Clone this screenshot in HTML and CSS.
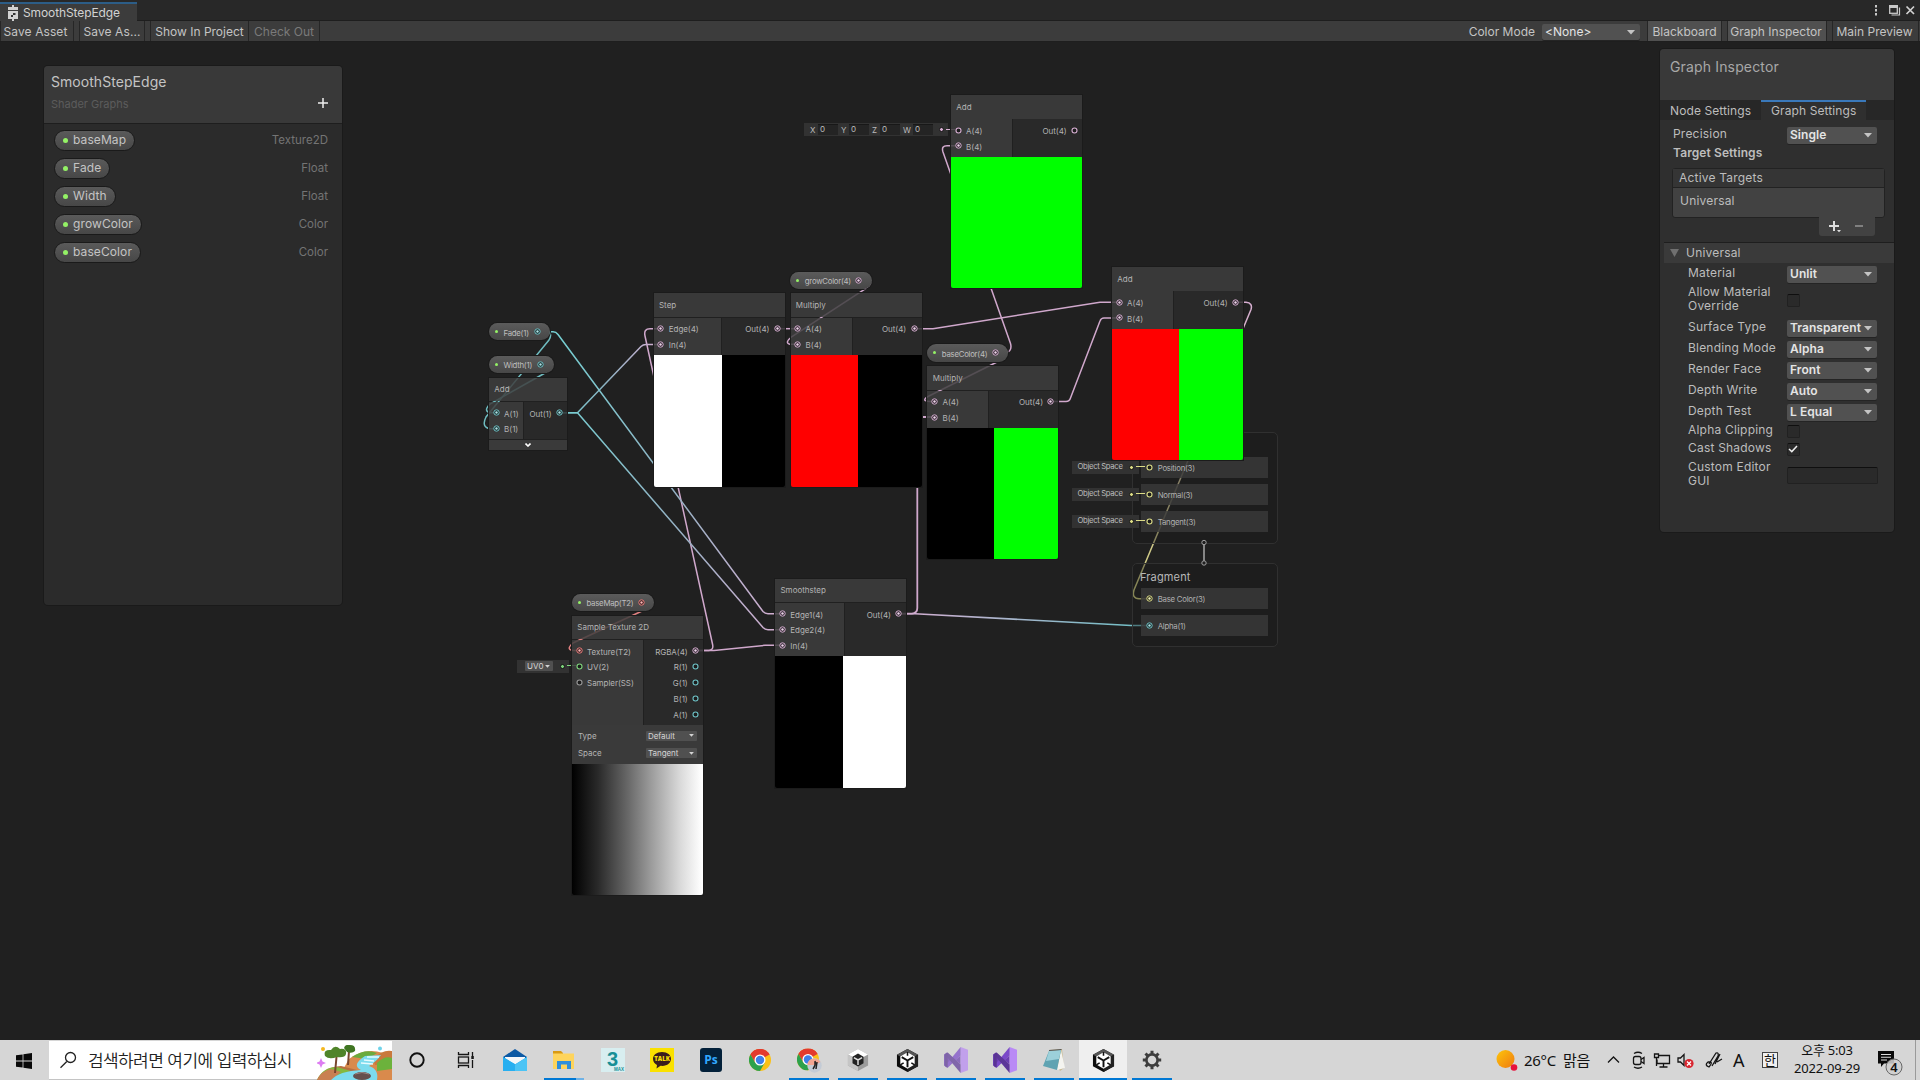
FILE: index.html
```html
<!DOCTYPE html>
<html lang="ko">
<head>
<meta charset="utf-8">
<title>SmoothStepEdge</title>
<link rel="stylesheet" href="styles.css">
</head>
<body>
<svg class="defs" width="0" height="0">
  <symbol id="on" viewBox="0 0 7 7"><circle cx="3.5" cy="3.5" r="2.7" fill="#1c1c1c" stroke="currentColor" stroke-width="1"/><circle cx="3.5" cy="3.5" r="1.300" fill="currentColor"/><circle cx="3.5" cy="3.5" r=".9" fill="#ffffff80"/></symbol>
  <symbol id="off" viewBox="0 0 7 7"><circle cx="3.5" cy="3.5" r="2.5" fill="#1c1c1c" stroke="currentColor" stroke-width="1.100"/></symbol>
  <symbol id="arrow" viewBox="0 0 8 5"><path d="M0 0H8L4 4.6Z" fill="currentColor"/></symbol>
  <symbol id="unity" viewBox="0 0 24 26"><path d="M12 1 23 7V19L12 25 1 19V7Z" fill="#0c0c0c"/><path d="M12 1 23 7 12 13 1 7Z" fill="#555"/><path d="M12 13 23 7V19L12 25Z" fill="#222"/><path d="M12 4.5 19.5 8.8V17.2L12 21.5 4.500 17.200V8.800Z" fill="#fff"/><path d="M12 13V20M12 13 6 9.500M12 13 18 9.500" stroke="#111" stroke-width="2"/><path d="M12 4V8M4.500 17.500 8 15.500M19.500 17.500 16 15.500" stroke="#111" stroke-width="1.600"/></symbol>
  <symbol id="chrome" viewBox="0 0 24 24"><circle cx="12" cy="12" r="12" fill="#fbc116"/><path d="M12 12 1.600 6A12 12 0 0 1 22.400 6Z" fill="#e33b2e"/><path d="M12 6H22.400A12 12 0 0 0 1.600 6L6.800 15Z" fill="#e33b2e"/><path d="M1.600 6A12 12 0 0 0 12 24L17.200 15 6.800 15Z" fill="#2da14c"/><circle cx="12" cy="12" r="6" fill="#fff"/><circle cx="12" cy="12" r="4.600" fill="#3f7fe8"/></symbol>
  <symbol id="vs" viewBox="0 0 26 28"><path d="M0 8 3 6 18 19V9L3 22 0 20Z" fill="#6a3fb0"/><path d="M18 0 26 3V25L18 28Z" fill="#b98af5"/><path d="M18 0V9L4 22.500 1 20.500Z" fill="#7a49c8"/><path d="M18 28V19L4 6 1 8Z" fill="#5c3798"/><path d="M1 8 4 6V22.500L1 20.500Z" fill="#5a3494"/></symbol>
</svg>

<header class="tabbar">
  <div class="doc-tab">
    <svg width="12" height="16" viewBox="0 0 12 16"><path d="M1 2H11V5H1ZM1 6H11V14H1ZM5 0H7V2H5ZM5 14H7V16H5Z" fill="#d2d2d2"/><path d="M6 8H8.500V10H6ZM4 10H6V12H4Z" fill="#333"/></svg>
    <span>SmoothStepEdge</span>
  </div>
  <div class="window-buttons">
    <svg width="46" height="12" viewBox="0 0 46 12"><g fill="#c8c8c8"><path d="M5 0H7V2.400H5ZM5 4H7V6.400H5ZM5 8H7V10.400H5Z"/></g><rect x="19.700" y=".7" width="7.600" height="7.600" fill="none" stroke="#c8c8c8" stroke-width="1.300"/><path d="M19 0H28V3H19Z" fill="#c8c8c8"/><path d="M29.500 2.500V10H21.500" fill="none" stroke="#c8c8c8" stroke-width="1.200"/><path d="M36.500 1.500 44 9M44 1.500 36.500 9" stroke="#d2d2d2" stroke-width="1.700"/></svg>
  </div>
</header>

<nav class="toolbar">
  <button class="tool t-save">Save Asset</button>
  <button class="tool t-saveas">Save As...</button>
  <button class="tool t-show">Show In Project</button>
  <button class="tool t-check">Check Out</button>
  <span class="color-mode">Color Mode</span>
  <div class="dropdown mode"><span>&lt;None&gt;</span><svg width="8" height="5"><use href="#arrow"/></svg></div>
  <button class="tool on t-board">Blackboard</button>
  <button class="tool on t-insp">Graph Inspector</button>
  <button class="tool t-prev">Main Preview</button>
</nav>

<main class="canvas">
  <svg class="edges" width="1920" height="1080" viewBox="0 0 1920 1080">
    <defs>
      <linearGradient id="g1" gradientUnits="userSpaceOnUse" x1="559" y1="0" x2="661" y2="0"><stop offset="0" stop-color="#75cfd2"/><stop offset=".4" stop-color="#86b4c2"/><stop offset="1" stop-color="#d6add1"/></linearGradient>
      <linearGradient id="g2" gradientUnits="userSpaceOnUse" x1="559" y1="0" x2="783" y2="0"><stop offset="0" stop-color="#75cfd2"/><stop offset=".5" stop-color="#93b2c4"/><stop offset="1" stop-color="#d6add1"/></linearGradient>
      <linearGradient id="g3" gradientUnits="userSpaceOnUse" x1="899" y1="0" x2="1149" y2="0"><stop offset="0" stop-color="#d6add1"/><stop offset="1" stop-color="#6dc0c6"/></linearGradient>
      <linearGradient id="g4" gradientUnits="userSpaceOnUse" x1="0" y1="302" x2="0" y2="598"><stop offset="0" stop-color="#d6add1"/><stop offset=".6" stop-color="#cfc39a"/><stop offset="1" stop-color="#cfce7c"/></linearGradient>
    </defs>
    <g fill="none" stroke-width="1.500" stroke="#d0a8cc">
      <path d="M777 328.700H798"/>
      <path d="M914 328.700H933L1100 302.300H1120"/>
      <path d="M859 280H868Q874 283 866 288.500L792 336.500Q784 343 790 344.300H798"/>
      <path d="M995 353H1001Q1004 357 997 362L929 396Q920 401 930 401.500H935"/>
      <path d="M995 353H1006Q1012.500 351 1010.500 343.500L943 152Q941 145.700 947 145.700H958"/>
      <path d="M1051 401.500H1066Q1069.500 401.500 1070.500 398L1100 321Q1101 318 1104 318H1120"/>
      <path d="M899 613.700H912Q917.300 613 917.300 608V421Q917.300 417 921 417H935" stroke-width="1.800"/>
      <path d="M695 650.500H714L765 645.300H783"/>
      <path d="M695 650.500H709Q713.500 650 712.700 645L645 336Q643.500 328.700 650 328.700H661"/>
      <path d="M559 412.700H577.500L641 346.500Q643 344.500 646 344.500H661" stroke="url(#g1)"/>
      <path d="M559 412.700H577.500L763 627.500Q765 629.700 768 629.700H783" stroke="url(#g2)"/>
      <path d="M537 331.700H553Q556 331.700 558 334.500L763 611.500Q765 613.700 768 613.700H783" stroke="url(#g2)"/>
      <path d="M537 331.700H547Q553 333 549 340L486 417Q481 427 490 428.700H497" stroke="#6fbcc0"/>
      <path d="M541 364H547Q552 368 545 373L490 404Q483 411 490 412.700H497" stroke="#6fbcc0"/>
      <path d="M899 613.700H915L1131 625.600H1149" stroke="url(#g3)"/>
      <path d="M1235 302.300H1246Q1253 303 1251 309.500L1134 590Q1131.500 598.500 1139 598.700H1149" stroke="url(#g4)"/>
      <path d="M640 602H645Q650 607 641 611.500L573 643Q565 650 574 650.500H580" stroke="#e08080"/>
    </g>
  </svg>

  <section class="context vertex">
    <div class="block"><svg class="port vec3"><use href="#off"/></svg><span>Position(3)</span></div>
    <div class="block"><svg class="port vec3"><use href="#off"/></svg><span>Normal(3)</span></div>
    <div class="block"><svg class="port vec3"><use href="#off"/></svg><span>Tangent(3)</span></div>
  </section>
  <section class="context fragment">
    <h3>Fragment</h3>
    <div class="block"><svg class="port vec3"><use href="#on"/></svg><span>Base Color(3)</span></div>
    <div class="block"><svg class="port vec1"><use href="#on"/></svg><span>Alpha(1)</span></div>
  </section>
  <svg class="link" width="10" height="30" viewBox="0 0 10 30"><path d="M5 7V23" stroke="#a0a0a0" stroke-width="1.600"/><g fill="#202020" stroke="#a0a0a0"><circle cx="5" cy="4.500" r="2.200"/><circle cx="5" cy="25" r="2.200"/></g></svg>

  <div class="slot space s1"><span>Object Space</span><i class="pin vec3"></i></div>
  <div class="slot space s2"><span>Object Space</span><i class="pin vec3"></i></div>
  <div class="slot space s3"><span>Object Space</span><i class="pin vec3"></i></div>

  <div class="slot vector"><b>X</b><u>0</u><b>Y</b><u>0</u><b>Z</b><u>0</u><b class="w">W</b><u>0</u><i class="pin vec4"></i></div>
  <div class="slot uv"><div class="mini"><span>UV0</span><svg width="5" height="3" viewBox="0 0 8 5"><use href="#arrow"/></svg></div><i class="pin vec2"></i></div>

  <article class="node n-addtop">
    <h2>Add</h2>
    <div class="ports"><div class="in"><p><svg class="port vec4"><use href="#off"/></svg>A(4)</p><p><svg class="port vec4"><use href="#on"/></svg>B(4)</p></div><div class="out"><p>Out(4)<svg class="port vec4"><use href="#off"/></svg></p></div></div>
    <div class="preview green"></div>
  </article>

  <article class="node n-step">
    <h2>Step</h2>
    <div class="ports"><div class="in"><p><svg class="port vec4"><use href="#on"/></svg>Edge(4)</p><p><svg class="port vec4"><use href="#on"/></svg>In(4)</p></div><div class="out"><p>Out(4)<svg class="port vec4"><use href="#on"/></svg></p></div></div>
    <div class="preview white-black"></div>
  </article>

  <article class="node n-mul1">
    <h2>Multiply</h2>
    <div class="ports"><div class="in"><p><svg class="port vec4"><use href="#on"/></svg>A(4)</p><p><svg class="port vec4"><use href="#on"/></svg>B(4)</p></div><div class="out"><p>Out(4)<svg class="port vec4"><use href="#on"/></svg></p></div></div>
    <div class="preview red-black"></div>
  </article>

  <article class="node n-mul2">
    <h2>Multiply</h2>
    <div class="ports"><div class="in"><p><svg class="port vec4"><use href="#on"/></svg>A(4)</p><p><svg class="port vec4"><use href="#on"/></svg>B(4)</p></div><div class="out"><p>Out(4)<svg class="port vec4"><use href="#on"/></svg></p></div></div>
    <div class="preview black-green"></div>
  </article>

  <article class="node n-addright">
    <h2>Add</h2>
    <div class="ports"><div class="in"><p><svg class="port vec4"><use href="#on"/></svg>A(4)</p><p><svg class="port vec4"><use href="#on"/></svg>B(4)</p></div><div class="out"><p>Out(4)<svg class="port vec4"><use href="#on"/></svg></p></div></div>
    <div class="preview red-green"></div>
  </article>

  <article class="node n-addleft">
    <h2>Add</h2>
    <div class="ports"><div class="in"><p><svg class="port vec1"><use href="#on"/></svg>A(1)</p><p><svg class="port vec1"><use href="#on"/></svg>B(1)</p></div><div class="out"><p>Out(1)<svg class="port vec1"><use href="#on"/></svg></p></div></div>
    <div class="foot"><svg width="6" height="4" viewBox="0 0 6 4"><path d="M.5 .5 3 3 5.500 .5" fill="none" stroke="#fff" stroke-width="1.600"/></svg></div>
  </article>

  <article class="node n-smooth">
    <h2>Smoothstep</h2>
    <div class="ports"><div class="in"><p><svg class="port vec4"><use href="#on"/></svg>Edge1(4)</p><p><svg class="port vec4"><use href="#on"/></svg>Edge2(4)</p><p><svg class="port vec4"><use href="#on"/></svg>In(4)</p></div><div class="out"><p>Out(4)<svg class="port vec4"><use href="#on"/></svg></p></div></div>
    <div class="preview black-white"></div>
  </article>

  <article class="node n-sample">
    <h2>Sample Texture 2D</h2>
    <div class="ports"><div class="in"><p><svg class="port tex"><use href="#on"/></svg>Texture(T2)</p><p><svg class="port vec2"><use href="#off"/></svg>UV(2)</p><p><svg class="port ss"><use href="#off"/></svg>Sampler(SS)</p></div><div class="out"><p>RGBA(4)<svg class="port vec4"><use href="#on"/></svg></p><p>R(1)<svg class="port vec1"><use href="#off"/></svg></p><p>G(1)<svg class="port vec1"><use href="#off"/></svg></p><p>B(1)<svg class="port vec1"><use href="#off"/></svg></p><p>A(1)<svg class="port vec1"><use href="#off"/></svg></p></div></div>
    <div class="controls">
      <div class="control"><span>Type</span><div class="mini"><span>Default</span><svg width="5" height="3" viewBox="0 0 8 5"><use href="#arrow"/></svg></div></div>
      <div class="control"><span>Space</span><div class="mini"><span>Tangent</span><svg width="5" height="3" viewBox="0 0 8 5"><use href="#arrow"/></svg></div></div>
    </div>
    <div class="preview ramp"></div>
  </article>

  <div class="pill p-fade"><i></i><span>Fade(1)</span><svg class="port vec1"><use href="#on"/></svg></div>
  <div class="pill p-width"><i></i><span>Width(1)</span><svg class="port vec1"><use href="#on"/></svg></div>
  <div class="pill p-grow"><i></i><span>growColor(4)</span><svg class="port vec4"><use href="#on"/></svg></div>
  <div class="pill p-base"><i></i><span>baseColor(4)</span><svg class="port vec4"><use href="#on"/></svg></div>
  <div class="pill p-map"><i></i><span>baseMap(T2)</span><svg class="port tex"><use href="#on"/></svg></div>

  <aside class="blackboard">
    <header>
      <div><h1>SmoothStepEdge</h1><small>Shader Graphs</small></div>
      <svg width="10" height="10" viewBox="0 0 10 10"><path d="M5 0V10M0 5H10" stroke="#eee" stroke-width="1.500"/></svg>
    </header>
    <ul>
      <li><span class="prop"><i></i>baseMap</span><em>Texture2D</em></li>
      <li><span class="prop"><i></i>Fade</span><em>Float</em></li>
      <li><span class="prop"><i></i>Width</span><em>Float</em></li>
      <li><span class="prop"><i></i>growColor</span><em>Color</em></li>
      <li><span class="prop"><i></i>baseColor</span><em>Color</em></li>
    </ul>
  </aside>

  <aside class="inspector">
    <h1>Graph Inspector</h1>
    <div class="tabs"><span class="tab">Node Settings</span><span class="tab active">Graph Settings</span></div>
    <div class="field precision"><label>Precision</label><div class="dropdown"><span>Single</span><svg width="8" height="5"><use href="#arrow"/></svg></div></div>
    <h4>Target Settings</h4>
    <div class="targets"><div class="targets-head">Active Targets</div><div class="targets-item">Universal</div></div>
    <div class="targets-buttons"><svg width="56" height="19" viewBox="0 0 56 19"><path d="M15 4V14M10 9H20" stroke="#ddd" stroke-width="2"/><path d="M18 13H22L20 15.200Z" fill="#ddd"/><path d="M36 9H44" stroke="#808080" stroke-width="2"/></svg></div>
    <div class="fold"><svg width="9" height="8" viewBox="0 0 9 8"><path d="M0 0H9L4.500 8Z" fill="#707070"/></svg><span>Universal</span></div>
    <div class="fields">
      <div class="field"><label>Material</label><div class="dropdown"><span>Unlit</span><svg width="8" height="5"><use href="#arrow"/></svg></div></div>
      <div class="field tall"><label>Allow Material Override</label><div class="check"></div></div>
      <div class="field"><label>Surface Type</label><div class="dropdown"><span>Transparent</span><svg width="8" height="5"><use href="#arrow"/></svg></div></div>
      <div class="field"><label>Blending Mode</label><div class="dropdown"><span>Alpha</span><svg width="8" height="5"><use href="#arrow"/></svg></div></div>
      <div class="field"><label>Render Face</label><div class="dropdown"><span>Front</span><svg width="8" height="5"><use href="#arrow"/></svg></div></div>
      <div class="field"><label>Depth Write</label><div class="dropdown"><span>Auto</span><svg width="8" height="5"><use href="#arrow"/></svg></div></div>
      <div class="field"><label>Depth Test</label><div class="dropdown"><span>L Equal</span><svg width="8" height="5"><use href="#arrow"/></svg></div></div>
      <div class="field short"><label>Alpha Clipping</label><div class="check"></div></div>
      <div class="field short"><label>Cast Shadows</label><div class="check"><svg width="10" height="8" viewBox="0 0 10 8"><path d="M1 4 3.800 6.600 9 1" fill="none" stroke="#eee" stroke-width="1.500"/></svg></div></div>
      <div class="field tall last"><label>Custom Editor GUI</label><div class="textbox"></div></div>
    </div>
  </aside>
</main>

<footer class="taskbar">
  <div class="start"><svg width="16" height="16" viewBox="0 0 16 16"><path d="M0 2.300 6.600 1.400V7.600H0ZM7.400 1.300 16 0V7.600H7.400ZM0 8.400H6.600V14.600L0 13.700ZM7.400 8.400H16V16L7.400 14.700Z" fill="#0a0a0a"/></svg></div>
  <div class="search">
    <svg class="lens" width="18" height="18" viewBox="0 0 18 18"><circle cx="11" cy="6.500" r="5" fill="none" stroke="#222" stroke-width="1.300"/><path d="M7.300 10.500 1 16.700" stroke="#222" stroke-width="1.300"/></svg>
    <span>검색하려면 여기에 입력하십시</span>
    <svg class="scene" width="75" height="35" viewBox="0 0 75 35">
      <path d="M32 14Q48 2 66 8L75 20V35H20Z" fill="#d98a4c"/><path d="M35 12Q48 3 60 8L50 14Z" fill="#6aab3c"/><path d="M56 14Q66 4 75 6V20H58Z" fill="#c9793c"/><path d="M60 18Q68 10 75 13V24L60 26Z" fill="#6cb23c"/>
      <path d="M0 35Q6 22 24 21L44 26 30 35Z" fill="#b9703f"/><path d="M0 35Q6 22 20 22L34 26 20 31Z" fill="#84b93f"/><path d="M0 35Q4 26 14 24L24 27 14 35Z" fill="#c98052"/>
      <path d="M48 11 64 10Q60 16 52 21 62 24 60 35H14Q22 26 44 25 34 20 48 11Z" fill="#7ddcee"/><path d="M50 12H62M47 15 57 16M44 18 56 19" stroke="#e6fbff" stroke-width="1.300"/><ellipse cx="45" cy="31" rx="9" ry="4" fill="#65504e"/><path d="M38 29Q45 26 52 29" stroke="#9b8683" fill="none"/>
      <path d="M18 28 19.500 12M31 20 32 6" stroke="#79472e" stroke-width="2"/><path d="M8 11Q6 4 14 5 18-1 23 4 30 3 29 9 28 13 20 12 12 15 8 11Z" fill="#4f8429"/><path d="M27 3Q28-1 33 0 39 0 38 6 35 9 30 7Z" fill="#3f7522"/>
      <circle cx="6" cy="4" r="2" fill="#f5b81e"/><circle cx="63" cy="3.500" r="2" fill="#6fd3ea"/><path d="M4 13 5.500 16.500 9 18 5.500 19.500 4 23 2.500 19.500-1 18 2.500 16.500Z" fill="#dd7df2"/>
    </svg>
  </div>
  <div class="apps">
    <div class="app"><svg width="18" height="18" viewBox="0 0 18 18"><circle cx="9" cy="9" r="6.700" fill="none" stroke="#111" stroke-width="1.900"/></svg></div>
    <div class="app"><svg width="18" height="18" viewBox="0 0 18 18"><g fill="none" stroke="#161616" stroke-width="1.300"><path d="M1.500 1V3.500H11.500V1M1.500 17V14.500H11.500V17"/><rect x="1.500" y="6" width="10" height="6"/><path d="M15.500 1V5M15.500 9V17"/></g><path d="M14.300 5H16.800V8H14.300Z" fill="#161616"/></svg></div>
    <div class="app"><svg width="24" height="24" viewBox="0 0 24 24"><path d="M0 9 12 1 24 9V13H0Z" fill="#0c59a4"/><path d="M2 9H22V15L12 17 2 15Z" fill="#f5f7f9"/><path d="M0 9 12 16.500 24 9V23H0Z" fill="#1c9be8"/><path d="M0 9 24 23H0Z" fill="#28aff0"/><path d="M12 16.500 24 9V23H12Z" fill="#4cc4f5"/><path d="M3 9H21L12 15Z" fill="#f5f7f9"/></svg></div>
    <div class="app run many"><svg width="24" height="22" viewBox="0 0 24 22"><path d="M1 2H9L11 4V9H1Z" fill="#d99a13"/><path d="M1 4.500H22V20H1Z" fill="#fed45c"/><path d="M5 20V12H19V20H15V15.500H9V20Z" fill="#2f8fdc"/></svg></div>
    <div class="app"><svg class="max" width="24" height="24" viewBox="0 0 24 24"><rect width="24" height="24" fill="#d8eef0"/><text class="max3" x="6" y="17.500">3</text><text class="maxs" x="13" y="22.800">MAX</text></svg></div>
    <div class="app"><svg width="24" height="24" viewBox="0 0 24 24"><rect width="24" height="24" fill="#fae100"/><path d="M12 4C6.500 4 3 7 3 11 3 14 5 16 7 17L6.500 20.500 10.500 17.800C17 18.500 21 15 21 11 21 7 17.500 4 12 4Z" fill="#3a1d1d"/><text class="talk" x="12" y="13.300" text-anchor="middle">TALK</text></svg></div>
    <div class="app"><svg width="22" height="24" viewBox="0 0 22 24"><rect width="22" height="24" rx="3" fill="#04213a"/><text class="ps" x="11" y="16" text-anchor="middle">Ps</text></svg></div>
    <div class="app"><svg width="22" height="22"><use href="#chrome"/></svg></div>
    <div class="app run"><svg width="26" height="26" viewBox="0 0 26 26"><use href="#chrome" x="1" y="1.500" width="22" height="22"/><circle cx="18.500" cy="18.500" r="7.200" fill="#c3cbd6"/><path d="M11.300 18A7.200 7.200 0 0 1 24.500 15L19 18Z" fill="#f2a592"/><path d="M17 22Q20 18 19 14M21 15 20 22" stroke="#222" stroke-width="1.500" fill="none"/></svg></div>
    <div class="app run"><svg width="22" height="24" viewBox="0 0 24 26"><path d="M12 1 23 7V19L12 25 1 19V7Z" fill="#9c9c9c"/><path d="M12 1 23 7 12 13 1 7Z" fill="#fff"/><path d="M1 7 12 13V25L1 19Z" fill="#c5c5c5"/><path d="M12 6 18 9.500V16.500L12 20 6 16.500V9.500Z" fill="#222"/><path d="M12 13V18.500M12 13 7.500 10.500M12 13 16.500 10.500" stroke="#ddd" stroke-width="1.600"/></svg></div>
    <div class="app run"><svg width="23" height="25"><use href="#unity"/></svg></div>
    <div class="app run"><svg class="faded" width="24" height="26"><use href="#vs"/></svg></div>
    <div class="app run"><svg width="24" height="26"><use href="#vs"/></svg></div>
    <div class="app run"><svg width="24" height="24" viewBox="0 0 24 24"><path d="M7 2 20 1 22 20 18 23Z" fill="#c9b98d"/><path d="M19 2 23 20 15 22Z" fill="#f4f4f0"/><path d="M7 3 19 2 15 22 1 18Z" fill="#5fa3b2"/><path d="M7 3 19 2 17 11 4 13Z" fill="#9cd0da"/><path d="M7 2.500 19.500 1.500" stroke="#555" stroke-width="1"/></svg></div>
    <div class="app run active"><svg width="23" height="25"><use href="#unity"/></svg></div>
    <div class="app run"><svg width="20" height="20" viewBox="0 0 20 20"><circle cx="10" cy="10" r="5.600" fill="none" stroke="#3d3d3d" stroke-width="2.600"/><path d="M10 .8V4M10 16V19.200M.8 10H4M16 10H19.200M3.500 3.500 5.700 5.700M14.300 14.300 16.500 16.500M16.500 3.500 14.300 5.700M5.700 14.300 3.500 16.500" stroke="#3d3d3d" stroke-width="3"/></svg></div>
  </div>
  <div class="tray">
    <svg class="sun" width="22" height="22" viewBox="0 0 22 22"><defs><linearGradient id="sg" x1="0" y1="0" x2="1" y2="1"><stop offset="0" stop-color="#fdc50b"/><stop offset="1" stop-color="#ef7a11"/></linearGradient></defs><circle cx="9.500" cy="10" r="9" fill="url(#sg)"/><circle cx="18" cy="18.500" r="3.300" fill="#e8113c"/></svg>
    <span class="weather">26°C&nbsp; 맑음</span>
    <svg class="icons" width="126" height="20" viewBox="0 0 126 20">
      <g fill="none" stroke="#151515" stroke-width="1.300">
        <path d="M1 12.500 6.500 7 12 12.500"/>
        <rect x="26.500" y="6.500" width="7.500" height="8" rx="2"/><path d="M34 9.500 37 7.500V13.500L34 11.500M27 3.500Q31 1 35 3.500M27 17Q31 19.500 35 17"/>
        <path d="M51 5.500H62.500V13.500H50V9.500M56.500 13.500V17M52.500 17H60.500"/><path d="M47.500 4H51.500V7.500H47.500ZM49.500 7.500V16"/>
        <path d="M71 8H73.500L77 4.500V15.500L73.500 12H71Z"/>
        <path d="M102 17Q97 15 101 12 107 11 102 17M102 14 109 3Q112 2 111 6L105 16M108 14 113 4M110 12 115 9"/>
      </g>
      <circle cx="82" cy="13.500" r="4.600" fill="#d8252f"/><path d="M80 11.500 84 15.500M84 11.500 80 15.500" stroke="#fff" stroke-width="1.300"/>
    </svg>
    <span class="ime-a">A</span>
    <span class="ime-k">한</span>
    <div class="clock"><span>오후 5:03</span><span>2022-09-29</span></div>
    <div class="notes"><svg width="26" height="26" viewBox="0 0 26 26"><path d="M0 1H16V13.500H6L3 17V13.500H0Z" fill="#0a0a0a"/><path d="M3 4.500H13M3 7.200H13M3 10H9" stroke="#ddd" stroke-width="1.100"/><circle cx="16" cy="17" r="8" fill="#cfcfcfe0" stroke="#666"/><text class="count" x="16" y="22" text-anchor="middle">4</text></svg></div>
  </div>
</footer>
</body>
</html>
```

FILE: styles.css
```css
* { box-sizing: border-box; }
body {
  margin: 0; width: 1920px; height: 1080px; overflow: hidden;
  display: flex; flex-direction: column;
  background: #202020; color: #c4c4c4;
  font: 12px/14px Inter, "Noto Sans CJK KR", sans-serif;
}
h1, h2, h3, h4, p, ul { margin: 0; padding: 0; font-weight: 400; list-style: none; }
.defs { position: absolute; }
svg { display: block; flex: none; }

/* window tab strip */
.tabbar { height: 21px; flex: none; display: flex; justify-content: space-between; background: #282828; border-bottom: 1px solid #1e1e1e; }
.doc-tab { width: 137px; height: 19px; margin-top: 2px; display: flex; align-items: center; gap: 4px; padding-left: 7px; background: #3c3c3c; border-top: 2px solid #2c5d87; color: #d2d2d2; letter-spacing: -.1px; }
.window-buttons { padding: 5px 4px 0 0; }

.toolbar { height: 21px; flex: none; display: flex; background: #3c3c3c; border-bottom: 1px solid #1e1e1e; }
.tool { height: 20px; margin: 0; padding: 1px 0 0; border: 1px solid #262626; border-width: 0 1px; background: #3c3c3c; color: #c4c4c4; font: 12px/18px Inter, sans-serif; letter-spacing: 0; text-align: center; white-space: nowrap; }
.tool.on { background: #505050; }
.t-save { width: 74px; margin-right: 5px; padding-right: 3px; letter-spacing: .1px; }
.t-saveas { width: 66px; margin-right: 5px; letter-spacing: .1px; }
.t-show { width: 99px; }
.t-check { width: 71px; color: #7a7a7a; border-left: 0; }
.color-mode { margin-left: auto; line-height: 21px; letter-spacing: 0; padding-right: 7px; }
.dropdown { display: flex; align-items: center; justify-content: space-between; background: #515151; border-radius: 2px; box-shadow: 0 1px 0 #242424; color: #e4e4e4; height: 17px; width: 90px; padding: 0 5px 0 3px; font-weight: 600; line-height: 16px; letter-spacing: .05px; }
.dropdown svg { color: #c4c4c4; }
.mode { width: 98px; height: 16px; margin: 3px 7px 0 0; font-weight: 400; }
.t-board { width: 75px; margin-right: 5px; }
.t-insp { width: 100px; margin-right: 5px; padding-right: 2px; }
.t-prev { width: 87px; margin-right: 1px; padding-right: 2px; }

.canvas { flex: 1; }
.edges { position: absolute; left: 0; top: 0; }

/* port and type colours */
.port { width: 7px; height: 7px; }
.vec4 { color: #d9b0d4; }
.vec3 { color: #dcdc86; }
.vec2 { color: #7fd67d; }
.vec1 { color: #6fc3c7; }
.tex { color: #ee7d7d; }
.ss { color: #999; }

/* graph nodes */
.node { position: absolute; width: 131px; font-size: 8px; line-height: 10px; letter-spacing: -.05px; color: #b4b4b4; box-shadow: 0 0 0 1px #1b1b1b; }
.node h2 { height: 23.700px; padding: 6.700px 0 0 5.300px; font-size: 8px; line-height: 10px; background: #3e3e3ed9; letter-spacing: 0; }
.ports { display: flex; margin-top: .8px; }
.in, .out { padding: 2.800px 0; }
.in { width: 68px; padding-left: 3.800px; background: #3e3e3ed9; border-right: 1px solid #202020; }
.out { flex: 1; padding-right: 4px; background: #2c2c2cd9; }
.ports p { height: 15.800px; display: flex; align-items: center; gap: 4.300px; line-height: 11px; padding-top: 2.400px; }
.out p { justify-content: flex-end; }
.ports p .port { margin-top: -2.400px; }
.preview { height: 131.300px; margin-top: .2px; border-radius: 0 0 2px 2px; }
.green { background: #0f0; }
.white-black { background: linear-gradient(90deg, #fff 68px, #000 68px); }
.red-black { background: linear-gradient(90deg, #f00 67.500px, #000 67.500px); }
.black-green { background: linear-gradient(90deg, #000 67.500px, #0f0 67.500px); }
.red-green { background: linear-gradient(90deg, #f00 67px, #0f0 67px); }
.black-white { background: linear-gradient(90deg, #000 68px, #fff 68px); }
.ramp { background: linear-gradient(90deg, #000, #2a2a2a 20%, #666 42%, #a0a0a0 62%, #d8d8d8 82%, #fff 99%); }
.n-addtop { left: 951px; top: 95px; } .n-addtop .in { width: 61.500px; }
.n-step { left: 653.700px; top: 293.400px; } 
.n-mul1 { left: 790.500px; top: 293.400px; } .n-mul1 .in { width: 62px; }
.n-mul2 { left: 927.400px; top: 366.300px; } .n-mul2 .in { width: 62px; }
.n-addright { left: 1112px; top: 267px; } .n-addright .in { width: 62px; }
.n-addleft { left: 489px; top: 377.700px; width: 78px; } .n-addleft .in { width: 35px; }
.n-smooth { left: 775.200px; top: 578.700px; } .n-smooth .in { width: 70px; }
.n-sample { left: 572px; top: 615.700px; } .n-sample .in { width: 72px; }
.foot { height: 10px; margin-top: 1px; background: #3a3a3a; display: flex; justify-content: center; align-items: center; }
.controls { margin-top: .6px; padding: 1.600px 6px 2px; background: #3a3a3a; }
.control { height: 17.500px; display: flex; align-items: center; justify-content: space-between; }
.mini { width: 51px; height: 10px; padding: 0 3px 0 2px; display: flex; align-items: center; justify-content: space-between; background: #505050; color: #d4d4d4; font-size: 8px; line-height: 10px; border-radius: 1px; }

/* property nodes */
.pill { position: absolute; height: 17.300px; display: flex; align-items: center; padding: 0 9.500px 0 6px; background: linear-gradient(#5b5b5b, #474747); border-radius: 9px; box-shadow: 0 0 0 1px #1a1a1a; font-size: 7.800px; line-height: 10px; letter-spacing: -.25px; color: #bebebe; }
.pill i { width: 3px; height: 3px; border-radius: 50%; background: #94f266; margin-right: 5.500px; }
.pill span { flex: 1; padding-top: 2px; white-space: nowrap; }
.p-fade { left: 489px; top: 323px; width: 61px; }
.p-width { left: 489px; top: 355.500px; width: 64.500px; }
.p-grow { left: 790.300px; top: 271.500px; width: 81.500px; }
.p-base { left: 927.300px; top: 344.300px; width: 81px; }
.p-map { left: 572px; top: 593.500px; width: 82px; }

/* default-value slots */
.slot { position: absolute; display: flex; align-items: center; height: 13px; background: #323232; font-size: 8px; line-height: 10px; color: #bcbcbc; }
.pin { width: 5px; height: 5px; border: 1.500px solid #141414; border-radius: 50%; background: currentColor; position: relative; }
.pin::after { content: ""; position: absolute; left: 6px; top: .5px; width: 9px; height: 1.400px; background: currentColor; }
.space { left: 1072px; width: 66.500px; padding-left: 5.500px; justify-content: space-between; padding-right: 4.500px; font-size: 7.700px; letter-spacing: -.32px; white-space: nowrap; }
.s1 { top: 460.500px; } .s2 { top: 487.500px; } .s3 { top: 514.500px; }
.vector { left: 804px; top: 123px; width: 143.500px; padding-left: 6px; }
.vector b { font-weight: 400; width: 8px; }
.vector b.w { width: 10px; }
.vector u { width: 20px; height: 11px; padding-left: 2px; margin-right: 3px; text-decoration: none; background: #242424; border-top: 1px solid #181818; line-height: 9px; }
.vector .pin { margin-left: 3px; }
.uv { left: 517px; top: 659.500px; width: 52px; justify-content: space-between; padding: 0 4px 0 8px; }
.uv .mini { width: 28px; }

/* master stack */
.context { position: absolute; left: 1132px; width: 146px; padding: 0 9px 0 8px; border: 1px solid #303030; border-radius: 5px; background: #1a1a1a66; font-size: 7.800px; letter-spacing: -.25px; }
.context.vertex { top: 432px; height: 111.500px; padding-top: 23.700px; }
.context.fragment { top: 563.300px; height: 84px; }
.fragment h3 { font-size: 11px; line-height: 14px; padding: 6px 0 0; margin: 0 -1px; height: 23.700px; color: #b8b8b8; letter-spacing: .15px; }
.block { height: 21px; width: 127px; margin-bottom: 6px; display: flex; align-items: center; gap: 5px; padding-left: 4.700px; background: #3a3a3ad0; color: #b0b0b0; line-height: 10px; }
.block span { padding-top: 2px; }
.link { position: absolute; left: 1199px; top: 538px; }

/* blackboard */
.blackboard { position: absolute; left: 44px; top: 66px; width: 298px; height: 539px; background: #2b2b2b; border-radius: 4px; box-shadow: 0 0 0 1px #1a1a1a; }
.blackboard header { height: 57px; padding: 7px 14px 0 7px; display: flex; justify-content: space-between; background: #393939; border-radius: 4px 4px 0 0; }
.blackboard header svg { margin-top: 25px; }
.blackboard h1 { font-size: 14px; line-height: 17px; letter-spacing: .05px; }
.blackboard small { display: block; margin-top: 7px; font-size: 11px; line-height: 14px; color: #5c5c5c; letter-spacing: -.02px; }
.blackboard ul { border-top: 1px solid #1e1e1e; padding: 2px 15px 0 10px; }
.blackboard li { height: 28px; display: flex; align-items: center; justify-content: space-between; }
.prop { height: 21px; display: flex; align-items: center; gap: 5px; padding: 0 8px; border: 1px solid #1a1a1a; border-radius: 11px; background: linear-gradient(#5a5a5a, #474747); letter-spacing: .1px; }
.prop i { width: 5px; height: 5px; border-radius: 50%; background: #94f266; }
.blackboard em { font-style: normal; font-size: 11.500px; color: #747474; letter-spacing: 0; margin-right: -1px; }

/* inspector */
.inspector { position: absolute; left: 1660px; top: 49px; width: 234px; height: 483px; background: #2f2f2f; border-radius: 4px; box-shadow: 0 0 0 1px #1a1a1a; color: #bdbdbd; letter-spacing: .2px; }
.inspector h1 { height: 51px; padding: 9px 0 0 10px; font-size: 14px; line-height: 18px; letter-spacing: .15px; color: #a8a8a8; background: #393939; border-radius: 4px 4px 0 0; }
.tabs { display: flex; height: 20px; background: #272727; line-height: 21px; letter-spacing: .1px; }
.tab { width: 101px; padding-left: 10px; white-space: nowrap; }
.tab.active { width: 105px; background: #2f2f2f; border-top: 2px solid #3a79bb; line-height: 18px; }
.field { height: 21px; display: flex; align-items: center; }
.field label { width: 91px; line-height: 14.500px; padding-bottom: 1px; }
.field .dropdown { margin-top: 1px; }
.precision { margin-top: 4px; padding-left: 13px; }
.precision label { width: 114px; }
.inspector h4 { padding: 1px 0 0 13px; font-weight: 600; height: 23px; line-height: 14px; letter-spacing: .1px; }
.targets { width: 213px; height: 50px; margin-left: 12px; border: 1px solid #222; border-radius: 3px; background: #424242; }
.targets-head { height: 19px; padding: 2px 0 0 6px; background: #353535; border-bottom: 1px solid #222; }
.targets-item { padding: 6px 0 0 7px; }
.targets-buttons { width: 56px; height: 19px; margin: -1px 0 0 159px; background: #424242; border-radius: 0 0 3px 3px; }
.fold { height: 21px; margin: 6px 0 0 4px; display: flex; align-items: center; gap: 7px; padding-left: 6px; background: #3a3a3a; border-top: 1px solid #1e1e1e; }
.fields { padding-left: 28px; }
.fields label { width: 99px; padding-right: 8px; }
.fields .field label { white-space: nowrap; }
.fields .field.tall label { white-space: normal; padding-bottom: 3px; }
.field.tall { height: 33px; }
.field.short { height: 18px; }
.field.last { height: 33px; margin-top: 1px; }
.check { width: 13px; height: 13px; margin-left: -.5px; background: #2a2a2a; border: 1px solid #212121; border-top-color: #0f0f0f; border-radius: 2px; display: flex; align-items: center; justify-content: center; }
.textbox { width: 91px; height: 17px; background: #2a2a2a; border: 1px solid #212121; border-top-color: #0f0f0f; border-radius: 2px; }

/* taskbar */
.taskbar { height: 40px; flex: none; display: flex; background: #d6d6d6; color: #111; font-family: "Noto Sans", "Noto Sans CJK KR", sans-serif; }
.start { width: 49px; padding: 13px 0 0 16px; }
.search { width: 343px; margin-top: 1px; display: flex; align-items: center; background: #fff; border-bottom: 1px solid #c4c4c4; }
.lens { margin-left: 10px; width: 19px; }
.search span { margin-left: 10px; width: 230px; font: 350 17px/24px "Noto Sans CJK KR", sans-serif; letter-spacing: -.6px; white-space: nowrap; color: #222; }
.scene { margin: 4px 0 0; }
.apps { display: flex; gap: 1px; margin-left: 1px; }
.app { width: 48px; display: flex; align-items: center; justify-content: center; }
.app.run { background: linear-gradient(#0078d4, #0078d4) 50% 100% / 40px 2px no-repeat; }
.app.active { background: linear-gradient(#0078d4, #0078d4) 50% 100% / 48px 2px no-repeat #efefef; }
.app.many { background: linear-gradient(90deg, #0078d4 32px, #6fb2e6 32px) 50% 100% / 40px 2px no-repeat; }
.faded { opacity: .7; }
.max { overflow: visible; }
.max3 { font: 900 20px "Liberation Sans", sans-serif; fill: #178f96; }
.maxs { font: 700 4.500px "Liberation Sans", sans-serif; fill: #178f96; }
.talk { font: 800 6px "Open Sans", sans-serif; fill: #fae100; }
.ps { font: 700 12px "Open Sans", sans-serif; fill: #31a8ff; }
.tray { margin-left: auto; display: flex; align-items: center; margin-right: 4px; border-right: 1px solid #9a9a9a; }
.weather { width: 70px; margin: 0 13px 0 6px; font-size: 15px; line-height: 20px; white-space: nowrap; letter-spacing: -.3px; }
.ime-a { width: 14px; font-size: 18px; line-height: 20px; }
.ime-k { width: 16px; height: 16px; margin-left: 15px; border: 1px solid #444; background: #f0f0f0; font-size: 13px; line-height: 14px; text-align: center; }
.clock { width: 68px; margin: -2px 0 0 15px; display: flex; flex-direction: column; font-size: 13px; line-height: 18px; text-align: center; white-space: nowrap; letter-spacing: -.2px; }
.notes { margin: 6px 11px 0 17px; }
.count { font: 600 13px "Noto Sans", sans-serif; fill: #111; }
```
